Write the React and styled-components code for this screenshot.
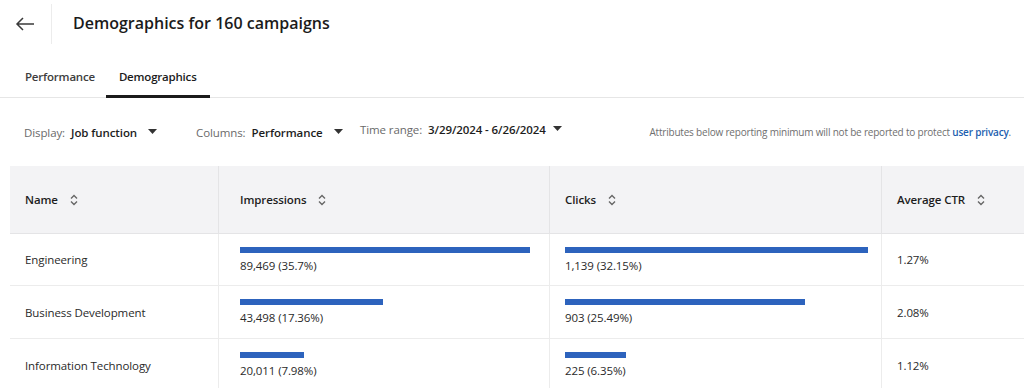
import React from 'react';
import styled, { createGlobalStyle } from 'styled-components';

const rows = [
  { name: 'Engineering', impressions: '89,469 (35.7%)', impWidth: 290, clicks: '1,139 (32.15%)', clickWidth: 303, ctr: '1.27%' },
  { name: 'Business Development', impressions: '43,498 (17.36%)', impWidth: 143, clicks: '903 (25.49%)', clickWidth: 240, ctr: '2.08%' },
  { name: 'Information Technology', impressions: '20,011 (7.98%)', impWidth: 64, clicks: '225 (6.35%)', clickWidth: 61, ctr: '1.12%' },
];

const BackArrow = () => (
  <svg width="20" height="14" viewBox="0 0 20 14" fill="none">
    <path d="M19 7H2M8 1L2 7l6 6" stroke="#3a3a3a" strokeWidth="1.5" />
  </svg>
);

const SortIcon = () => (
  <svg width="10" height="12" viewBox="0 0 10 12" fill="none">
    <path d="M2 4.5L5 1.5l3 3M2 7.5l3 3 3-3" stroke="#666" strokeWidth="1.4" />
  </svg>
);

const Caret = () => (
  <svg width="9" height="5" viewBox="0 0 9 5">
    <path d="M0 0h9L4.5 5z" fill="#333" />
  </svg>
);

const Filter = ({ label, value, width, raised }) => (
  <FilterItem $width={width} $raised={raised}>
    <FilterLabel>{label}</FilterLabel>
    <FilterValue>{value}</FilterValue>
    <Caret />
  </FilterItem>
);

const App = () => (
  <Page>
    <GlobalStyle />
    <TopBar>
      <BackButton><BackArrow /></BackButton>
      <Title>Demographics for 160 campaigns</Title>
    </TopBar>
    <Tabs>
      <Tab>Performance</Tab>
      <Tab $active>Demographics</Tab>
    </Tabs>
    <FilterBar>
      <Filter label="Display:" value="Job function" width="172px" />
      <Filter label="Columns:" value="Performance" width="164px" />
      <Filter label="Time range:" value="3/29/2024 - 6/26/2024" raised />
      <Notice>
        Attributes below reporting minimum will not be reported to protect
        {' '}
        <NoticeLink>user privacy</NoticeLink>
        .
      </Notice>
    </FilterBar>
    <Table>
      <HeadCell>Name<SortIcon /></HeadCell>
      <HeadCell $wide>Impressions<SortIcon /></HeadCell>
      <HeadCell>Clicks<SortIcon /></HeadCell>
      <HeadCell $last>Average CTR<SortIcon /></HeadCell>
      {rows.map((row) => (
        <React.Fragment key={row.name}>
          <Cell>{row.name}</Cell>
          <BarCell $wide>
            <Bar style={{ width: row.impWidth }} />
            <BarValue>{row.impressions}</BarValue>
          </BarCell>
          <BarCell>
            <Bar style={{ width: row.clickWidth }} />
            <BarValue>{row.clicks}</BarValue>
          </BarCell>
          <Cell $last>{row.ctr}</Cell>
        </React.Fragment>
      ))}
    </Table>
  </Page>
);

const GlobalStyle = createGlobalStyle`
  body {
    margin: 0;
    background: #fff;
    font-family: "Open Sans", "Noto Sans", sans-serif;
    color: #1d1d1d;
  }
`;

const Page = styled('div')`
  width: 1024px;
  height: 388px;
  overflow: hidden;
  background: #fff;
`;

const TopBar = styled('div')`
  display: flex;
  align-items: center;
  height: 46px;
`;

const BackButton = styled('div')`
  display: flex;
  align-items: center;
  justify-content: center;
  width: 52px;
  height: 40px;
  margin-top: 1px;
  padding-right: 2px;
  box-sizing: border-box;
  border-right: 1px solid #ececec;
`;

const Title = styled('h1')`
  margin: 0 0 0 21px;
  font-size: 16px;
  font-weight: 600;
  color: #1b1b1b;
`;

const Tabs = styled('div')`
  display: flex;
  height: 52px;
  padding-left: 11px;
  border-bottom: 1px solid #e6e6e6;
  box-sizing: border-box;
`;

const Tab = styled('div')`
  display: flex;
  align-items: center;
  padding: 12px 14px 0;
  font-size: 11.5px;
  font-weight: 600;
  letter-spacing: -0.2px;
  color: ${(p) => (p.$active ? '#1b1b1b' : '#3d3d3d')};
  border-bottom: 3px solid ${(p) => (p.$active ? '#1b1b1b' : 'transparent')};
  margin-bottom: -1px;

  & + & {
    margin-left: -3px;
    padding: 12px 13px 0;
  }
`;

const FilterBar = styled('div')`
  display: flex;
  align-items: center;
  height: 68px;
  padding: 0 13px 0 24px;
  box-sizing: border-box;
`;

const FilterItem = styled('div')`
  display: flex;
  align-items: center;
  gap: 6px;
  width: ${(p) => p.$width || 'auto'};
  box-sizing: border-box;
  margin-top: ${(p) => (p.$raised ? '-5px' : '0')};
  font-size: 11.5px;
  letter-spacing: -0.1px;
  svg {
    margin-left: ${(p) => (p.$raised ? '1px' : '5px')};
    margin-top: ${(p) => (p.$raised ? '-3px' : '-1px')};
  }
`;

const FilterLabel = styled('span')`
  color: #6a6a6a;
`;

const FilterValue = styled('span')`
  font-weight: 600;
  color: #1d1d1d;
`;

const Notice = styled('div')`
  margin-left: auto;
  font-size: 10px;
  letter-spacing: -0.2px;
  color: #6f6f6f;
`;

const NoticeLink = styled('span')`
  color: #1d5fb0;
  font-weight: 600;
`;

const Table = styled('div')`
  display: grid;
  grid-template-columns: 209px 331px 332px 1fr;
  grid-template-rows: 68px 52px 53px 53px;
  margin-left: 10px;
`;

const HeadCell = styled('div')`
  display: flex;
  align-items: center;
  gap: 11px;
  padding-left: ${(p) => (p.$wide ? '21px' : '15px')};
  background: #f3f3f5;
  border-right: ${(p) => (p.$last ? 'none' : '1px solid #e4e4e6')};
  border-bottom: 1px solid #e4e4e6;
  font-size: 11.5px;
  font-weight: 600;
  letter-spacing: -0.1px;
  color: #1d1d1d;
`;

const Cell = styled('div')`
  display: flex;
  align-items: center;
  padding-left: 15px;
  border-right: ${(p) => (p.$last ? 'none' : '1px solid #ececec')};
  border-bottom: 1px solid #ececec;
  font-size: 11.5px;
  letter-spacing: -0.1px;
  color: #2a2a2a;
`;

const BarCell = styled(Cell)`
  flex-direction: column;
  align-items: flex-start;
  justify-content: flex-start;
  padding-top: 13px;
  padding-left: ${(p) => (p.$wide ? '21px' : '15px')};
`;

const Bar = styled('div')`
  height: 6px;
  background: #2d63bd;
`;

const BarValue = styled('div')`
  margin-top: 5px;
  line-height: 16px;
`;

export default App;
